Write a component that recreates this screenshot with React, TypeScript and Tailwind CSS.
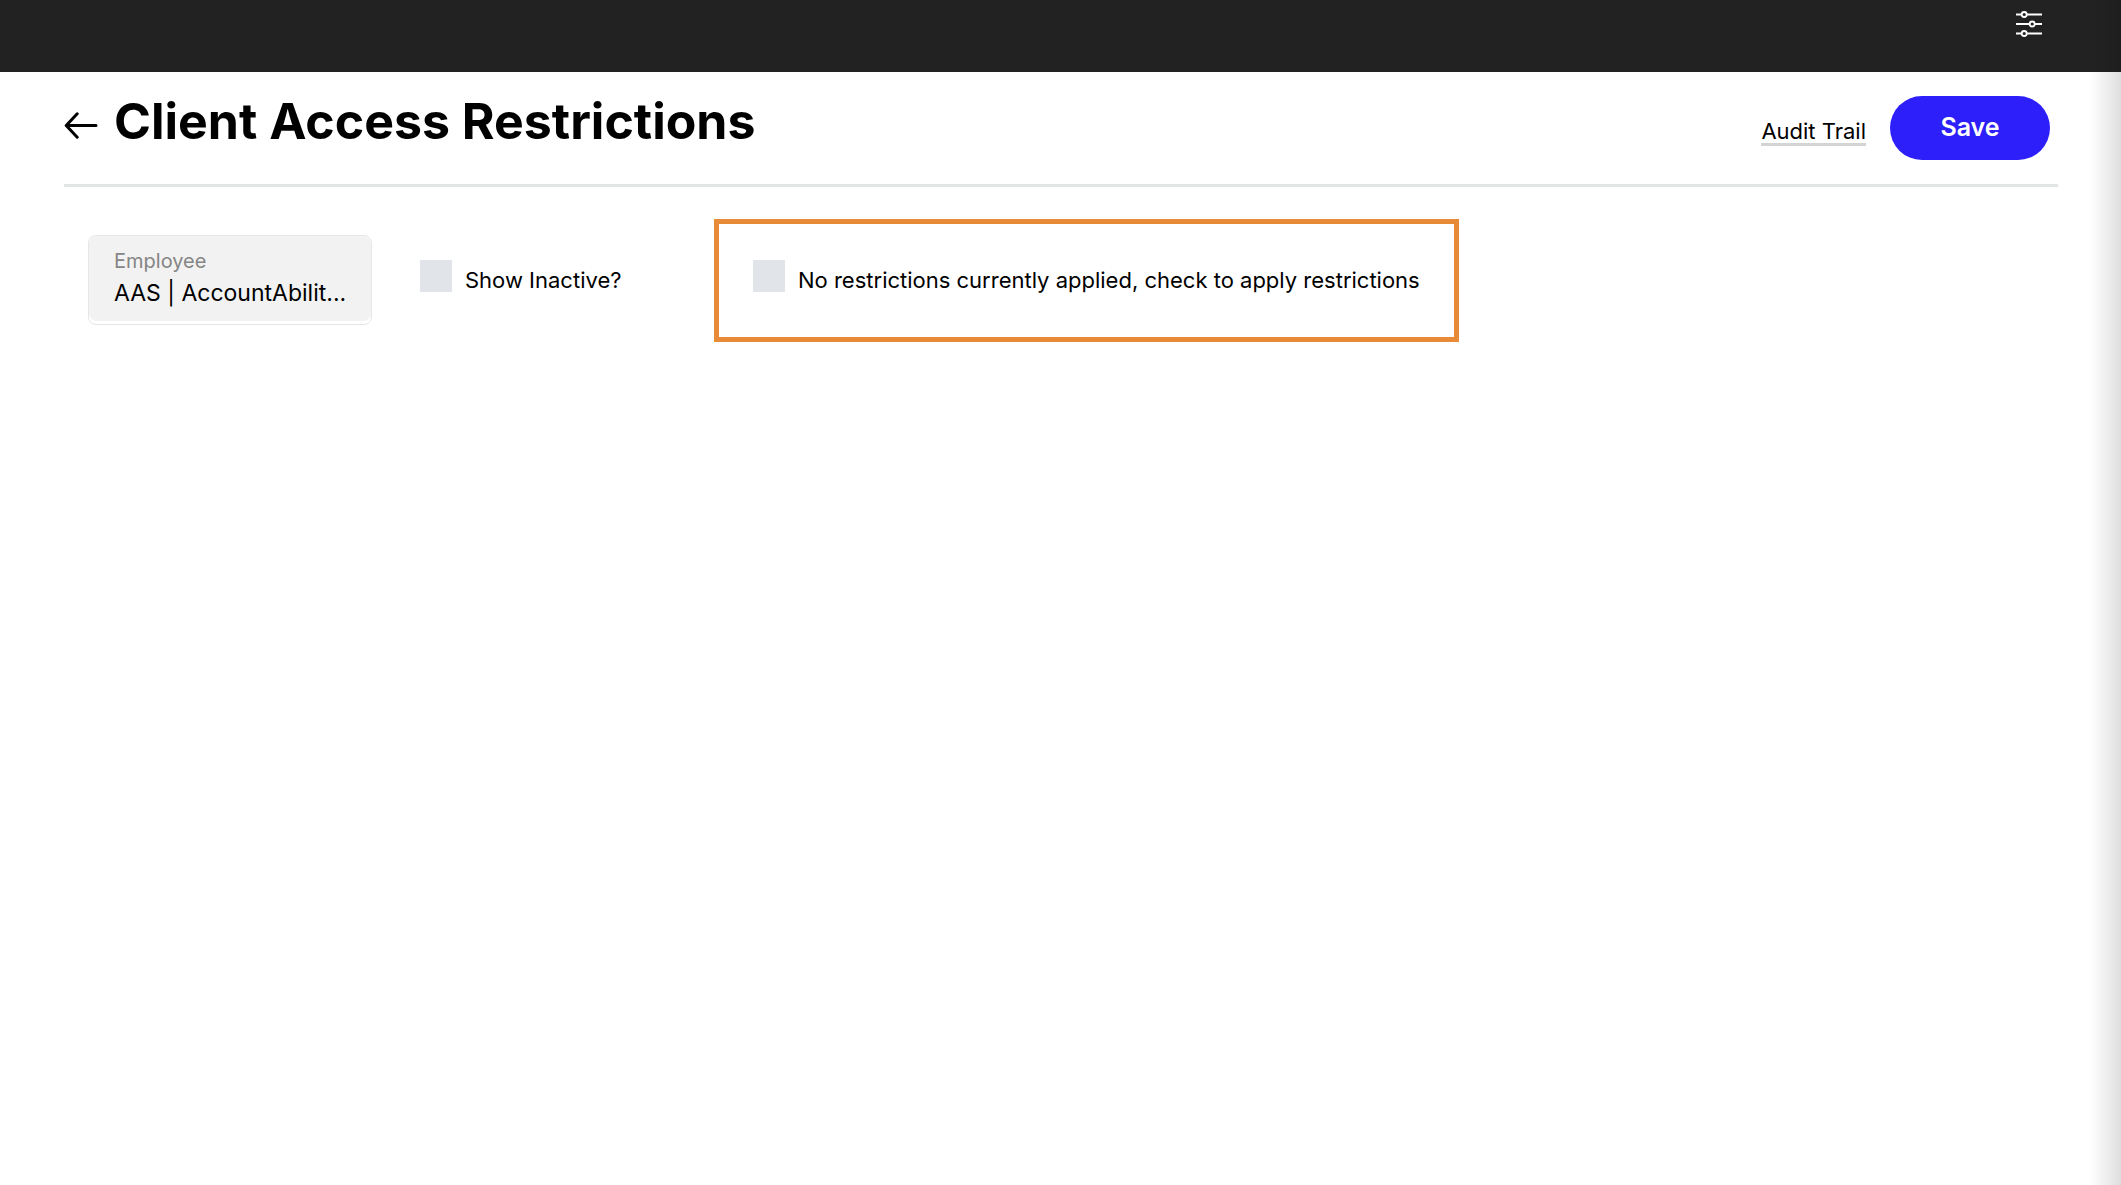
import React from "react";

function SlidersIcon() {
  return (
    <svg width="26" height="28" viewBox="0 0 26 28" fill="none" stroke="#fff" strokeWidth="1.8" aria-hidden="true">
      <path d="M0 4.5h5.5M11 4.5h15M0 14h13.5M19 14h7M0 23.5h5.5M11 23.5h15" />
      <circle cx="8.2" cy="4.5" r="2.5" />
      <circle cx="16.2" cy="14" r="2.5" />
      <circle cx="8.2" cy="23.5" r="2.5" />
    </svg>
  );
}

function BackArrowIcon() {
  return (
    <svg width="34" height="28" viewBox="0 0 34 28" fill="none" stroke="#000" strokeWidth="3" strokeLinecap="round" strokeLinejoin="round" aria-hidden="true">
      <path d="M32 13.5H2.5M13.2 1.8L2.2 13.5l11 11.7" />
    </svg>
  );
}

function CheckField({ id, label }: { id: string; label: string }) {
  return (
    <div className="flex items-start gap-[13px]">
      <input
        id={id}
        type="checkbox"
        className="size-8 shrink-0 appearance-none bg-[#e1e5ea] checked:bg-[#2d1ffa]"
      />
      <label htmlFor={id} className="pt-1 text-[22px] leading-8 whitespace-nowrap">
        {label}
      </label>
    </div>
  );
}

export default function App() {
  return (
    <div className="relative min-h-screen bg-white font-['Inter',sans-serif] text-black">
      <header className="flex h-18 items-start justify-end bg-[#222] pt-[10px] pr-[79px]">
        <button type="button" aria-label="Settings">
          <SlidersIcon />
        </button>
      </header>

      <main className="pr-[63px] pl-16">
        <div className="flex items-start justify-between border-b-3 border-[#e2e5e5] pt-6 pr-2 pb-6">
          <div className="flex items-start gap-4">
            <button type="button" aria-label="Back" className="pt-4">
              <BackArrowIcon />
            </button>
            <h1 className="text-[50px] leading-[50px] font-bold">Client Access Restrictions</h1>
          </div>
          <div className="flex items-center gap-6">
            <a href="#audit-trail" className="border-b-3 border-[#d4d4d4] pt-2 text-[22px] leading-6">
              Audit Trail
            </a>
            <button type="button" className="h-16 w-40 rounded-full bg-[#2d1ffa] text-[25px] font-semibold text-white">
              Save
            </button>
          </div>
        </div>

        <div className="flex items-start pt-8 pl-6">
          <div className="mt-4 w-71 rounded-lg border border-[#e6e6e6] pb-[3px]">
            <div className="flex h-[85px] flex-col rounded-lg bg-[#f2f2f2] px-[25px] pt-[11px]">
              <label htmlFor="employee" className="text-[20px] leading-7 text-[#858585]">
                Employee
              </label>
              <select id="employee" className="w-full appearance-none text-[23px] leading-9 whitespace-nowrap">
                <option>AAS | AccountAbilit...</option>
              </select>
            </div>
          </div>
          <div className="mt-[41px] ml-12 w-[294px]">
            <CheckField id="show-inactive" label="Show Inactive?" />
          </div>
          <div className="border-5 border-[#e88b38] px-[34px] pt-9 pb-[41px]">
            <CheckField id="apply-restrictions" label="No restrictions currently applied, check to apply restrictions" />
          </div>
        </div>
      </main>

      <div className="pointer-events-none absolute inset-y-0 right-0 w-8 bg-linear-to-r from-transparent via-black/6 to-black/13" />
    </div>
  );
}
